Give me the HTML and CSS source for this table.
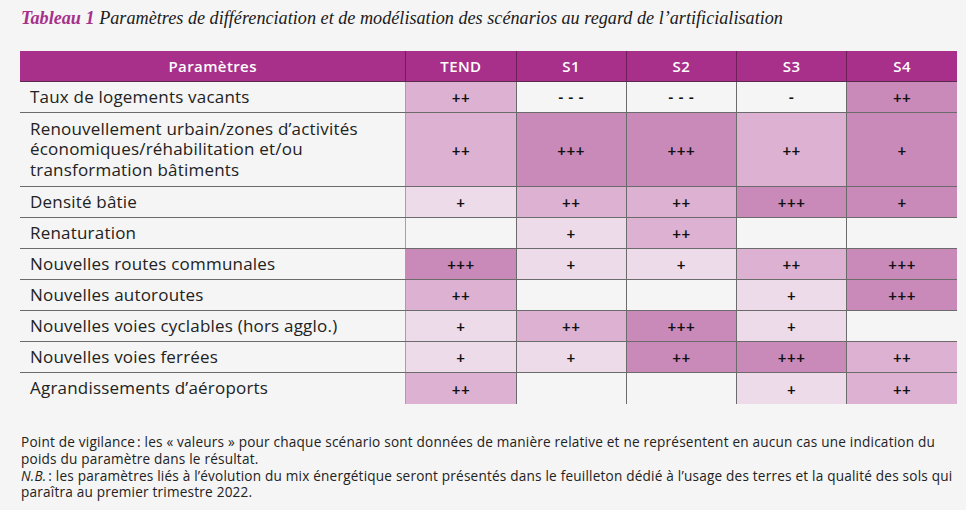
FILE: index.html
```html
<!DOCTYPE html>
<html lang="fr">
<head>
<meta charset="utf-8">
<link rel="stylesheet" href="styles.css">
</head>
<body>
<div class="page">
  <h1 class="title"><span class="tag">Tableau 1</span> Paramètres de différenciation et de modélisation des scénarios au regard de l’artificialisation</h1>
  <table class="grid">
    <colgroup>
      <col class="c-param"><col class="c-val"><col class="c-val"><col class="c-val"><col class="c-val"><col class="c-val">
    </colgroup>
    <thead>
      <tr><th>Paramètres</th><th>TEND</th><th>S1</th><th>S2</th><th>S3</th><th>S4</th></tr>
    </thead>
    <tbody>
      <tr><td class="p">Taux de logements vacants</td><td class="m">++</td><td>- - -</td><td>- - -</td><td>-</td><td class="d">++</td></tr>
      <tr class="tall"><td class="p">Renouvellement urbain/zones d’activités économiques/réhabilitation et/ou transformation bâtiments</td><td class="m">++</td><td class="d">+++</td><td class="d">+++</td><td class="m">++</td><td class="d">+</td></tr>
      <tr><td class="p">Densité bâtie</td><td class="l">+</td><td class="m">++</td><td class="m">++</td><td class="d">+++</td><td class="d">+</td></tr>
      <tr><td class="p">Renaturation</td><td></td><td class="l">+</td><td class="m">++</td><td></td><td></td></tr>
      <tr><td class="p">Nouvelles routes communales</td><td class="d">+++</td><td class="l">+</td><td class="l">+</td><td class="m">++</td><td class="d">+++</td></tr>
      <tr><td class="p">Nouvelles autoroutes</td><td class="m">++</td><td></td><td></td><td class="l">+</td><td class="d">+++</td></tr>
      <tr><td class="p">Nouvelles voies cyclables (hors agglo.)</td><td class="l">+</td><td class="m">++</td><td class="d">+++</td><td class="l">+</td><td></td></tr>
      <tr><td class="p">Nouvelles voies ferrées</td><td class="l">+</td><td class="l">+</td><td class="d">++</td><td class="d">+++</td><td class="m">++</td></tr>
      <tr class="last"><td class="p">Agrandissements d’aéroports</td><td class="m">++</td><td></td><td></td><td class="l">+</td><td class="m">++</td></tr>
    </tbody>
  </table>
  <div class="notes">
    <p>Point de vigilance&#8239;: les «&#160;valeurs&#160;» pour chaque scénario sont données de manière relative et ne représentent en aucun cas une indication du poids du paramètre dans le résultat.</p>
    <p><span class="nb">N.B.</span>&#8239;: les paramètres liés à l’évolution du mix énergétique seront présentés dans le feuilleton dédié à l’usage des terres et la qualité des sols qui paraîtra au premier trimestre 2022.</p>
  </div>
</div>
</body>
</html>
```
FILE: styles.css
```css
html, body {
  margin: 0;
  padding: 0;
  background: #f5f5f5;
}
.page {
  padding: 8px 0 0 20px;
  font-family: "Open Sans", "Lato", sans-serif;
  color: #1a1a1a;
}
.title {
  margin: 0 0 23px 1px;
  font-family: "Liberation Serif", serif;
  font-style: italic;
  font-weight: normal;
  font-size: 18.2px;
  line-height: 20px;
  color: #1a1a1a;
}
.title .tag {
  font-weight: bold;
  color: #a6308a;
}
.grid {
  border-collapse: collapse;
  table-layout: fixed;
  width: 937px;
}
.c-param { width: 385px; }
.c-val { width: 110px; }
.grid th {
  background: #a8308a;
  color: #fff;
  font-weight: 600;
  font-size: 15px;
  height: 30px;
  padding: 0;
  text-align: center;
  border-bottom: 1px solid #5a2a4c;
  letter-spacing: 0.4px;
}
.grid th + th {
  border-left: 1px solid #6e1f5a;
}
.grid td {
  height: 30px;
  padding: 0;
  text-align: center;
  font-family: "Lato", sans-serif;
  font-size: 15px;
  font-weight: 700;
  color: #111;
  border-bottom: 1px solid #6b6b6b;
  border-left: 1px solid #6b6b6b;
  letter-spacing: 0.5px;
}
.grid td.p {
  text-align: left;
  padding-left: 10px;
  font-family: "Open Sans", sans-serif;
  font-size: 17px;
  font-weight: 400;
  color: #222;
  letter-spacing: 0.2px;
  border-left: none;
  line-height: 20.5px;
}
.grid td.p + td {
  border-left: 1px solid #c58db6;
}
.grid tr.tall td { height: 73px; }
.grid tr.tall td.p { padding-right: 20px; }
.grid tr.last td { border-bottom: none; height: 31px; }
.grid td.l { background: #eddbe9; }
.grid td.m { background: #dcb1d1; }
.grid td.d { background: #c98aba; }
.notes {
  margin-top: 30px;
  font-size: 13.6px;
  line-height: 16.8px;
  letter-spacing: 0.2px;
  color: #222;
  padding-left: 1px;
}
.notes p { margin: 0; }
.nb { font-style: italic; }
```
